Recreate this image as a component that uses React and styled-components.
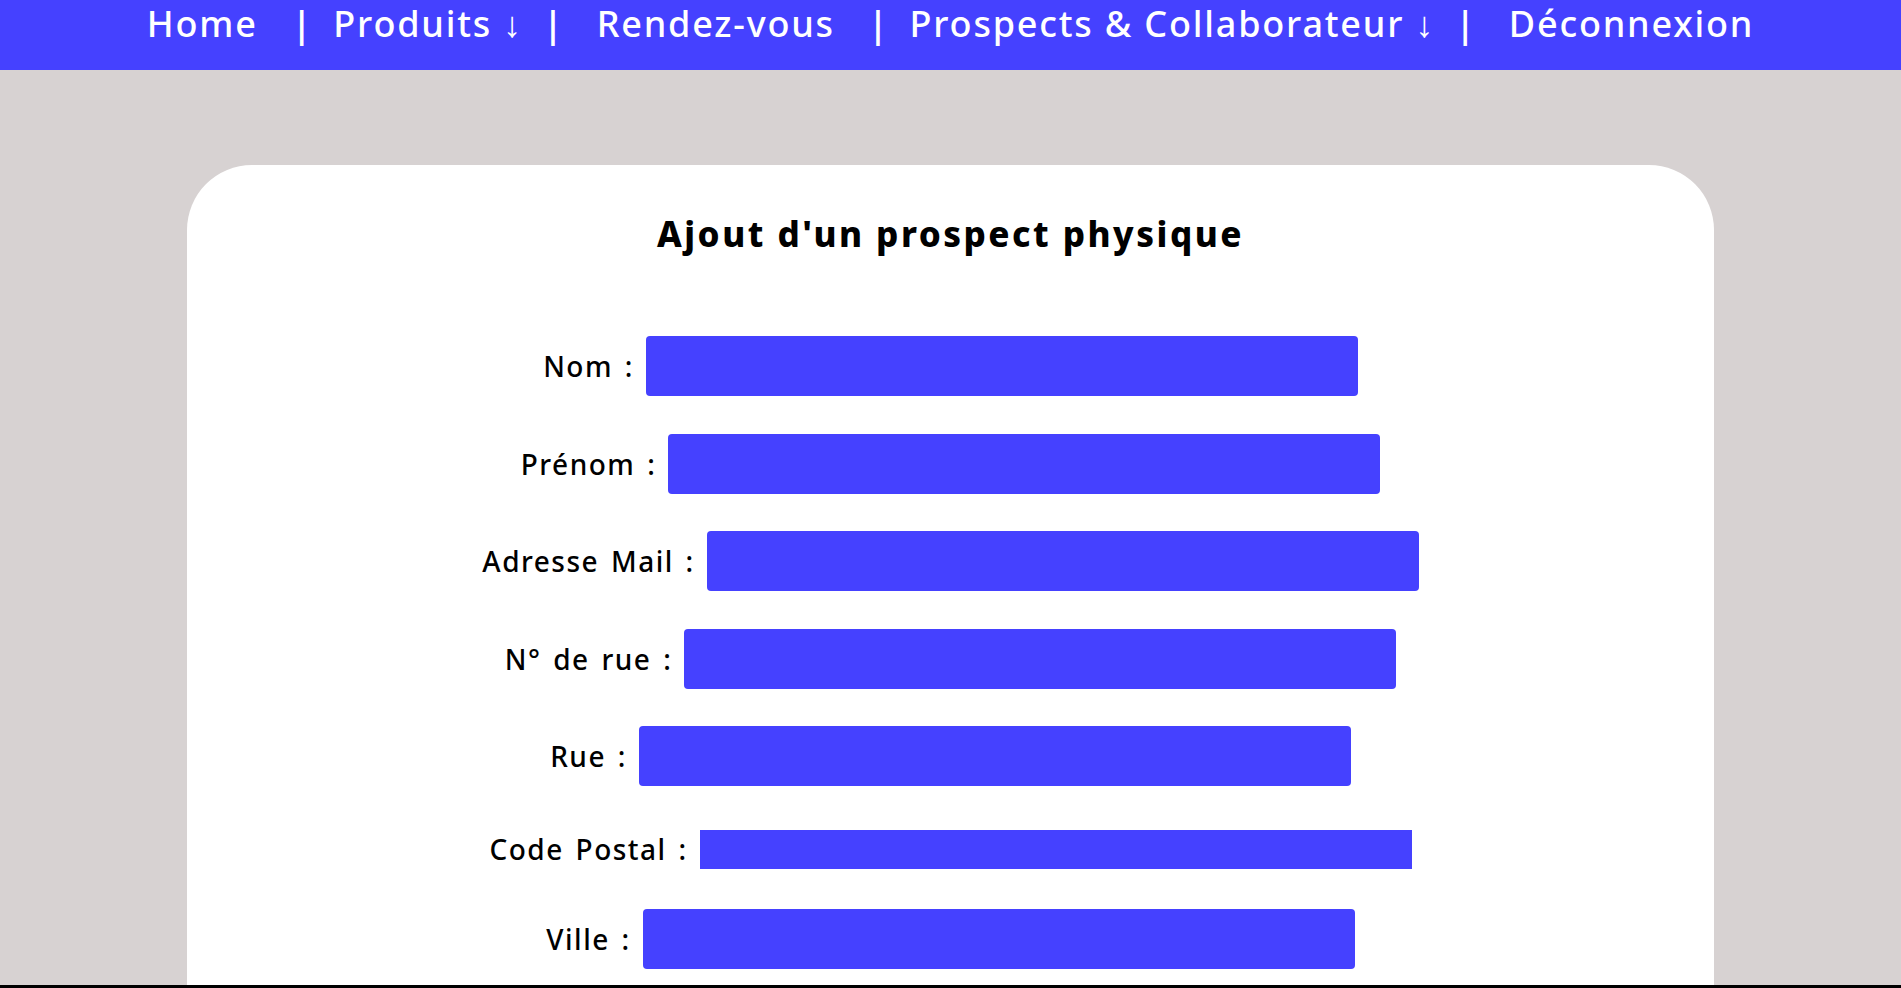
import React from 'react';
import styled, { createGlobalStyle } from 'styled-components';

const fields = [
  { label: 'Nom :', gap: 0 },
  { label: 'Prénom :', gap: 38 },
  { label: 'Adresse Mail :', gap: 37 },
  { label: 'N° de rue :', gap: 38 },
  { label: 'Rue :', gap: 37 },
  { label: 'Code Postal :', gap: 44, flat: true },
  { label: 'Ville :', gap: 40 },
];

function App() {
  return (
    <Page>
      <GlobalStyle />
      <NavBar>
        <NavItem>Home</NavItem>
        <Sep $left={34}>|</Sep>
        <NavItem>Produits ↓</NavItem>
        <Sep $right={32}>|</Sep>
        <NavItem>Rendez-vous</NavItem>
        <Sep $left={33}>|</Sep>
        <NavItem>Prospects &amp; Collaborateur ↓</NavItem>
        <Sep $right={32}>|</Sep>
        <NavItem>Déconnexion</NavItem>
      </NavBar>
      <Card>
        <Title>Ajout d'un prospect physique</Title>
        <Form>
          {fields.map((f) => (
            <Row key={f.label} $gap={f.gap}>
              <Label>{f.label}</Label>
              <Input type="text" $flat={f.flat} />
            </Row>
          ))}
        </Form>
      </Card>
    </Page>
  );
}

export default App;

const GlobalStyle = createGlobalStyle`
  body {
    margin: 0;
    font-family: "Noto Sans", "Open Sans", sans-serif;
    background-color: #d7d2d2;
  }
`;

const Page = styled.div`
  height: 985px;
  overflow: hidden;
  border-bottom: 3px solid #000;
  background-color: #d7d2d2;
`;

const NavBar = styled.nav`
  display: flex;
  justify-content: center;
  align-items: flex-start;
  height: 70px;
  background-color: #4541ff;
  color: #fff;
  font-size: 36px;
  font-weight: 500;
  line-height: 1.33;
  letter-spacing: 1.8px;
`;

const NavItem = styled.span`
  white-space: nowrap;
`;

const Sep = styled.span`
  margin-left: ${(p) => p.$left || 20}px;
  margin-right: ${(p) => p.$right || 20}px;
  font-weight: 600;
`;

const Card = styled.main`
  width: 1527px;
  margin: 95px auto 0;
  padding-top: 45px;
  min-height: 900px;
  background-color: #fff;
  border-radius: 65px 65px 0 0;
`;

const Title = styled.h1`
  margin: 0;
  text-align: center;
  font-size: 35px;
  font-weight: 800;
  line-height: 1.362;
  letter-spacing: 2.5px;
  color: #000;
`;

const Form = styled.form`
  display: flex;
  flex-direction: column;
  margin-top: 78px;
`;

const Row = styled.div`
  display: flex;
  justify-content: center;
  align-items: center;
  gap: 12px;
  margin-top: ${(p) => p.$gap}px;
`;

const Label = styled.label`
  font-size: 28px;
  font-weight: 500;
  letter-spacing: 1.5px;
  word-spacing: 3px;
  color: #000;
`;

const Input = styled.input`
  width: 712px;
  height: ${(p) => (p.$flat ? 39 : 60)}px;
  box-sizing: border-box;
  border: none;
  border-radius: ${(p) => (p.$flat ? 0 : 4)}px;
  background-color: #4541ff;
  outline: none;
`;
